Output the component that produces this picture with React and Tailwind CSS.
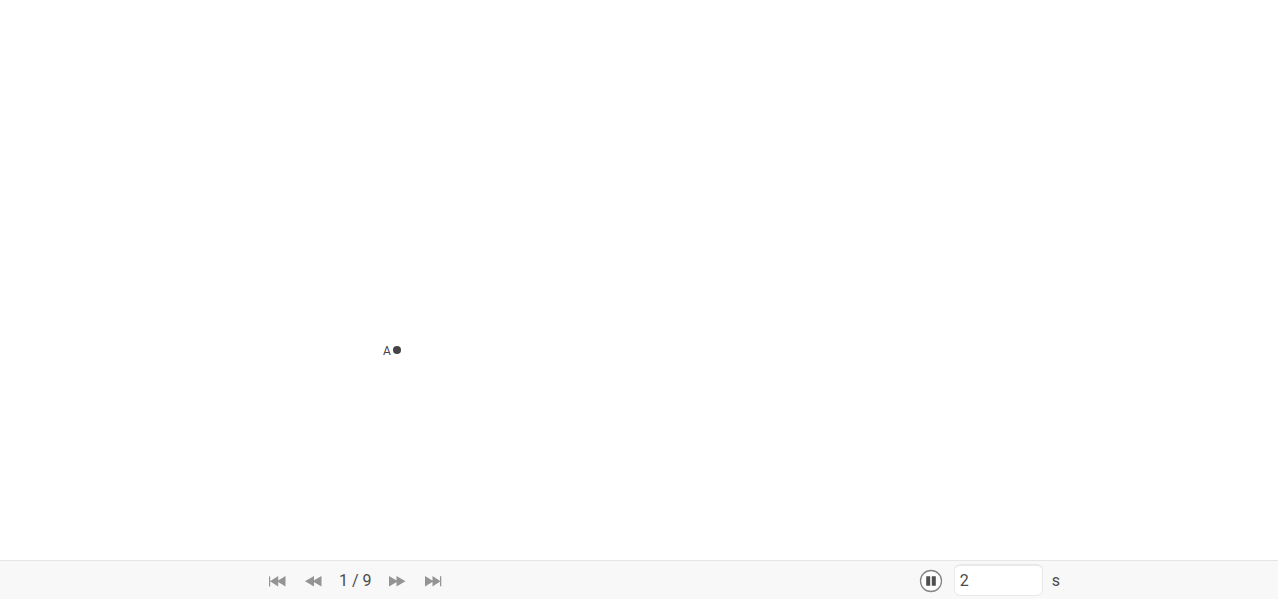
import React, { useState } from 'react';

const LAST_STEP = 9;

const POINTS = [{ name: 'A', x: 397, y: 350 }];

const ICONS = {
  first: 'M0 .5h1.2v10H0z M9.2 0v10.4L1 5.2z M16.5 0v10.4L8 5.2z',
  previous: 'M9 0v10.4L0 5.2z M16.5 0v10.4L7.5 5.2z',
  next: 'M0 0v10.4l9-5.2z M7.5 0v10.4l9-5.2z',
  last: 'M0 0v10.4l8.5-5.2z M7.5 0v10.4l8-5.2z M15 .2h1.3v10h-1.3z',
};

function StepButton({ icon, label, onClick }) {
  return (
    <button type="button" aria-label={label} onClick={onClick} className="flex h-6 w-[17px] items-center justify-center">
      <svg viewBox="0 0 17 11" className="h-[11px] w-[17px] fill-[#949494]">
        <path d={ICONS[icon]} />
      </svg>
    </button>
  );
}

function PauseIcon() {
  return (
    <svg viewBox="0 0 24 24" className="h-6 w-6">
      <circle cx="12" cy="12" r="10.5" fill="#fff" stroke="#858585" strokeWidth="1.3" />
      <path d="M7.2 7.3h4v9.4h-4z M12.8 7.3h4v9.4h-4z" fill="#505050" />
    </svg>
  );
}

export default function App() {
  const [step, setStep] = useState(1);
  const [seconds, setSeconds] = useState('2');

  return (
    <div className="flex h-screen flex-col bg-white pb-px font-['Roboto',sans-serif] text-[#4a4a4a]">
      {/* Construction area */}
      <main className="min-h-0 flex-1">
        <svg className="h-full w-full">
          {POINTS.map(p => (
            <g key={p.name} fill="#444">
              <text x={p.x - 14} y={p.y + 5} fontSize="12">{p.name}</text>
              <circle cx={p.x} cy={p.y} r="4" />
            </g>
          ))}
        </svg>
      </main>

      {/* Navigation bar */}
      <footer className="mr-px flex h-[39px] items-center justify-between border-t border-[#e6e6e6] bg-[#f8f8f8] pt-0.5 pr-[218px] pl-[269px] text-base">
        <nav className="flex items-center gap-[19px]">
          <StepButton icon="first" label="First step" onClick={() => setStep(1)} />
          <StepButton icon="previous" label="Previous step" onClick={() => setStep(Math.max(1, step - 1))} />
          <span className="-mx-0.5 min-w-8 text-center whitespace-nowrap">{step} / {LAST_STEP}</span>
          <StepButton icon="next" label="Next step" onClick={() => setStep(Math.min(LAST_STEP, step + 1))} />
          <StepButton icon="last" label="Last step" onClick={() => setStep(LAST_STEP)} />
        </nav>

        <div className="flex items-center">
          <button type="button" aria-label="Pause" className="mr-[11px]">
            <PauseIcon />
          </button>
          <input
            id="seconds"
            type="text"
            value={seconds}
            onChange={e => setSeconds(e.target.value)}
            className="-mt-0.5 h-8 w-[89px] rounded-md border border-t-2 border-[#e9e9e9] bg-white px-[5px] outline-none"
          />
          <label htmlFor="seconds" className="ml-[9px]">s</label>
        </div>
      </footer>
    </div>
  );
}
